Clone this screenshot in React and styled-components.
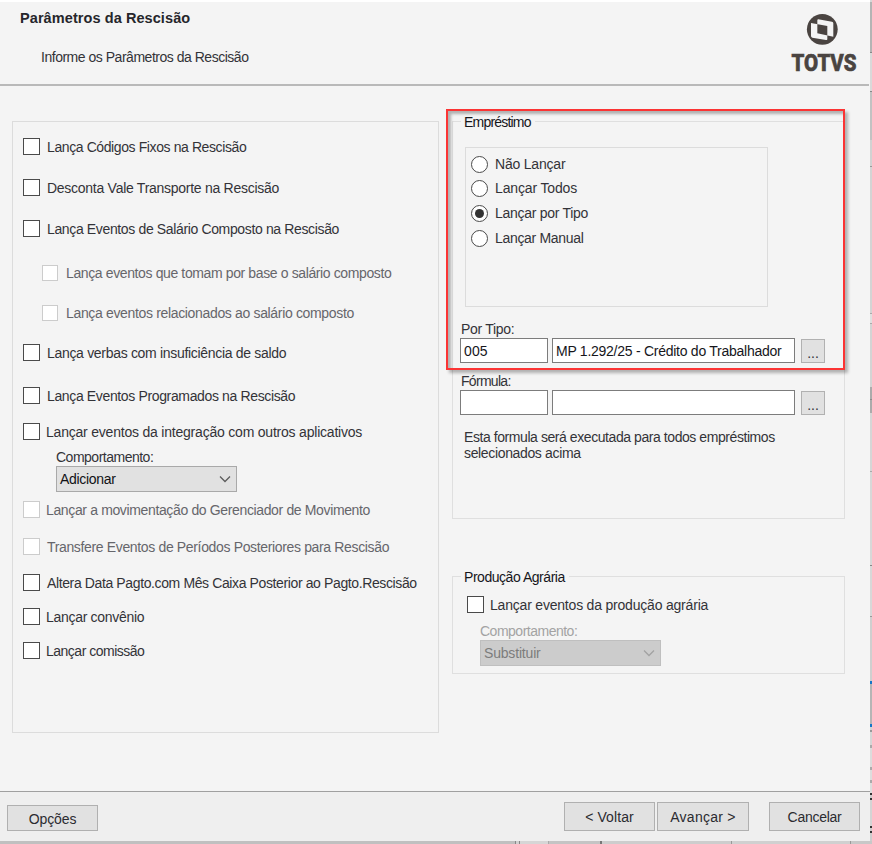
import React from "react";
import styled, { createGlobalStyle } from "styled-components";

const GlobalStyle = createGlobalStyle`
  *, *::before, *::after { box-sizing: border-box; }
  body {
    margin: 0;
    overflow: hidden;
    background: #c9c9c9;
    font-family: "Liberation Sans", Arial, sans-serif;
    font-size: 14px;
    color: #333338;
  }
`;

const Desktop = styled.div`
  display: grid;
  grid-template-columns: 870px 2px;
  grid-template-rows: 841px 3px;
  width: 872px;
  height: 844px;
`;

const Dialog = styled.main`
  display: flex;
  flex-direction: column;
  border-top: 2px solid #fff;
  background: #f4f4f4;
`;

const Header = styled.header`
  display: flex;
  justify-content: space-between;
  height: 84px;
  padding: 8px 7px 0 20px;
  border-bottom: 2px solid #b9b9b9;
  margin-right: 1px;
`;

const Headings = styled.div`
  display: flex;
  flex-direction: column;
  gap: 23px;
`;

const Title = styled.h1`
  margin: 0;
  font-size: 14.5px;
  line-height: 16px;
  letter-spacing: 0.08px;
  white-space: nowrap;
  color: #26262b;
`;

const Text = styled.span`
  font-size: 14px;
  line-height: 16px;
  white-space: nowrap;
  letter-spacing: ${(p) => p.$track || -0.3}px;
  color: ${(p) => p.$color || "inherit"};
`;

const Subtitle = styled(Text)`
  margin-left: 21px;
`;

const Brand = styled.svg`
  width: 72px;
  height: 68px;
  margin-top: 2px;
  overflow: visible;
`;

const Content = styled.div`
  display: flex;
  align-items: flex-start;
  gap: 13px;
  height: 705px;
  padding: 35px 0 0 12px;
`;

const OptionsPanel = styled.section`
  display: flex;
  flex-direction: column;
  align-items: flex-start;
  width: 427px;
  height: 612px;
  padding: 16px 0 0 10px;
  border: 1px solid #dcdcdc;
`;

const RightColumn = styled.div`
  position: relative;
  display: flex;
  flex-direction: column;
  gap: 57px;
  width: 393px;
`;

const GroupBox = styled.section`
  display: flex;
  flex-direction: column;
  align-items: flex-start;
  height: ${(p) => p.$height}px;
  border: 1px solid #dfdfdf;
`;

const Legend = styled(Text)`
  height: 16px;
  margin: -8px 0 0 8px;
  padding: 0 4px 0 3px;
  background: #f4f4f4;
  color: #16161b;
`;

const CheckRow = styled.label`
  display: flex;
  align-items: center;
  gap: ${(p) => p.$space || 7}px;
  height: 17px;
  margin: ${(p) => p.$top || 0}px 0 0 ${(p) => p.$indent || 0}px;
  color: ${(p) => (p.$disabled ? "#66666b" : "#333338")};

  ${Text} {
    padding-top: 1px;
  }
`;

const CheckBox = styled.span`
  flex: none;
  width: ${(p) => (p.$small ? 16 : 17)}px;
  height: ${(p) => (p.$small ? 16 : 17)}px;
  border: 1px solid ${(p) => (p.$disabled ? "#cccccc" : "#4a4a4a")};
  background: #fff;
`;

const FieldLabel = styled(Text)`
  height: 17px;
  margin: ${(p) => p.$top || 0}px 0 0 ${(p) => p.$indent || 0}px;
`;

const Select = styled.div`
  display: flex;
  align-items: center;
  justify-content: space-between;
  width: 181px;
  height: 26px;
  margin-left: ${(p) => p.$indent}px;
  padding: 0 4px 0 3px;
  border: 1px solid ${(p) => (p.$disabled ? "#bfbfbf" : "#a9a9a9")};
  background: ${(p) => (p.$disabled ? "#cccccc" : "#e1e1e1")};
  color: ${(p) => (p.$disabled ? "#7c7c7c" : "#111116")};
`;

const Chevron = styled.svg`
  width: 14px;
  height: 10px;
  fill: none;
  stroke: ${(p) => (p.$disabled ? "#a2a2a2" : "#5c5c5c")};
  stroke-width: 1.3;
`;

const RadioPanel = styled.div`
  display: flex;
  flex-direction: column;
  align-items: flex-start;
  gap: 8px;
  width: 303px;
  height: 160px;
  margin: 17px 0 0 12px;
  padding: 8px 0 0 5px;
  border: 1px solid #dcdcdc;
`;

const RadioRow = styled.label`
  display: flex;
  align-items: center;
  gap: 7px;
  height: 17px;
  margin-bottom: ${(p) => (p.$tight ? -1 : 0)}px;

  ${Text} {
    padding-bottom: 1px;
  }
`;

const Radio = styled.span`
  display: grid;
  place-items: center;
  width: 17px;
  height: 17px;
  border: 1px solid #4a4a4a;
  border-radius: 50%;
  background: #fff;

  &::after {
    content: "";
    width: 9px;
    height: 9px;
    border-radius: 50%;
    background: ${(p) => (p.$checked ? "#333" : "transparent")};
  }
`;

const LookupRow = styled.div`
  display: flex;
  align-items: flex-end;
  gap: 4px;
  margin: ${(p) => p.$top || 0}px 0 0 7px;
`;

const Input = styled.div`
  display: flex;
  align-items: center;
  width: ${(p) => p.$width}px;
  height: 25px;
  padding: 0 3px;
  border: 1px solid #7c7c7c;
  background: #fff;
  color: #16161b;
`;

const LookupButton = styled.button`
  width: 24px;
  height: 24px;
  margin-left: 2px;
  padding: 3px 0 0;
  border: 1px solid #b1b1b1;
  background: #e1e1e1;
  font: 14px/16px "Liberation Sans", Arial, sans-serif;
  color: #333338;
`;

const Note = styled.p`
  display: flex;
  flex-direction: column;
  margin: 14px 0 0 11px;
`;

/* Red callout drawn over the loan group */
const Highlight = styled.div`
  position: absolute;
  top: -12px;
  left: -6px;
  width: 399px;
  height: 261px;
  border: 2px solid #fb3434;
  box-shadow: 3px 3px 3px rgba(0, 0, 0, 0.28), inset 3px 3px 3px rgba(0, 0, 0, 0.28);
  pointer-events: none;
`;

const Footer = styled.footer`
  display: flex;
  align-items: flex-start;
  height: 50px;
  padding: 10px 10px 0 7px;
  border-top: 1px solid #a0a0a0;
  background: #efefef;
`;

const Button = styled.button`
  width: ${(p) => p.$width || 91}px;
  height: ${(p) => p.$height || 29}px;
  margin: ${(p) => p.$top || 0}px 0 0 ${(p) => p.$left || 0}px;
  padding: 1px 0 0;
  border: 1px solid #b0b0b0;
  background: #e1e1e1;
  color: #2b2b30;
`;

const Strip = styled.div`
  display: flex;
  flex-direction: ${(p) => (p.$vertical ? "column" : "row")};
  grid-column: ${(p) => (p.$vertical ? "auto" : "1 / -1")};
  overflow: hidden;
  background: #cdcdcd;
`;

const Segment = styled.span`
  flex: 0 0 ${(p) => p.$size}px;
  background: ${(p) => p.$color};
`;

const rightEdge = [
  [2, "#d8d8d8"], [50, "#b4b4b4"], [1, "#888"], [38, "#d9d9d9"], [1, "#888"],
  [48, "#c2c2c2"], [26, "#d2d2d2"], [1, "#999"], [146, "#d4d4d4"], [1, "#aaa"],
  [9, "#e0e0e0"], [1, "#aaa"], [63, "#d4d4d4"], [12, "#ababab"], [1, "#8c8c8c"],
  [13, "#ababab"], [58, "#d6d6d6"], [1, "#aaa"], [93, "#d8d8d8"], [1, "#888"],
  [50, "#d8d8d8"], [1, "#999"], [64, "#cfcfcf"], [3, "#1677c8"], [40, "#b5b5b5"],
  [3, "#1677c8"], [3, "#d3d3d3"], [2, "#999"], [13, "#d6d6d6"], [3, "#aaa"],
  [19, "#dcdcdc"], [3, "#aaa"], [10, "#ddd"], [3, "#aaa"], [10, "#ddd"],
  [2, "#333"], [3, "#ccc"], [2, "#333"], [26, "#d4d4d4"], [2, "#333"],
  [3, "#ccc"], [2, "#333"],
];

const bottomEdge = [
  [515, "#c0c0c0"], [1, "#888"], [3, "#d0d0d0"], [1, "#888"], [28, "#d6d6d6"],
  [1, "#aaa"], [51, "#c4c4c4"], [2, "#777"], [129, "#cdcdcd"], [1, "#999"],
  [118, "#d0d0d0"], [1, "#999"], [21, "#c8c8c8"],
];

const options = [
  { text: "Lança Códigos Fixos na Rescisão", track: -0.4 },
  { text: "Desconta Vale Transporte na Rescisão", top: 24, track: -0.27 },
  { text: "Lança Eventos de Salário Composto na Rescisão", top: 24, track: -0.36 },
  { text: "Lança eventos que tomam por base o salário composto", top: 27, track: -0.38, indent: 19, disabled: true, small: true },
  { text: "Lança eventos relacionados ao salário composto", top: 23, track: -0.34, indent: 19, disabled: true, small: true },
  { text: "Lança verbas com insuficiência de saldo", top: 23, track: -0.31 },
  { text: "Lança Eventos Programados na Rescisão", top: 26, track: -0.36 },
  { text: "Lançar eventos da integração com outros aplicativos", top: 19, track: -0.21, space: 6 },
];

const moreOptions = [
  { text: "Lançar a movimentação do Gerenciador de Movimento", top: 9, track: -0.36, space: 6, disabled: true },
  { text: "Transfere Eventos de Períodos Posteriores para Rescisão", top: 20, track: -0.35, disabled: true },
  { text: "Altera Data Pagto.com Mês Caixa Posterior ao Pagto.Rescisão", top: 19, track: -0.38 },
  { text: "Lançar convênio", top: 17, track: -0.3, space: 6 },
  { text: "Lançar comissão", top: 17, track: -0.5, space: 6 },
];

const loanModes = [
  { text: "Não Lançar", track: -0.2, tight: true },
  { text: "Lançar Todos", track: -0.15 },
  { text: "Lançar por Tipo", track: -0.28, checked: true },
  { text: "Lançar Manual", track: -0.32 },
];

function Option({ text, track, top, indent, space, disabled, small }) {
  return (
    <CheckRow $top={top} $indent={indent} $space={small ? 8 : space} $disabled={disabled}>
      <CheckBox $disabled={disabled} $small={small} />
      <Text $track={track}>{text}</Text>
    </CheckRow>
  );
}

function Combo({ children, indent, track, disabled }) {
  return (
    <Select $indent={indent} $disabled={disabled}>
      <Text $track={track}>{children}</Text>
      <Chevron viewBox="0 0 14 10" $disabled={disabled}>
        <path d="M2 2.5 7 7.5 12 2.5" />
      </Chevron>
    </Select>
  );
}

function Logo() {
  return (
    <Brand viewBox="0 0 72 68" fill="#4a4441" role="img" aria-label="TOTVS">
      <circle cx="32.3" cy="17.3" r="15.4" />
      <g transform="translate(17 2) scale(.333)">
        <path
          fill="#f4f4f4"
          fillRule="evenodd"
          d="M34 16 75 23Q79 24 79 28V68L31 58V19Q31 16 34 16ZM12 27 61 36V76Q61 79 57 78L16 71Q12 70 12 66Z"
        />
      </g>
      <text x="1.5" y="59" textLength="65" lengthAdjust="spacingAndGlyphs" fontFamily="Roboto, sans-serif" fontWeight="800" fontSize="23.5" stroke="#4a4441" strokeWidth="0.7">
        TOTVS
      </text>
    </Brand>
  );
}

export default function App() {
  return (
    <>
      <GlobalStyle />
      <Desktop>
        <Dialog>
          <Header>
            <Headings>
              <Title>Parâmetros da Rescisão</Title>
              <Subtitle $track={-0.48}>Informe os Parâmetros da Rescisão</Subtitle>
            </Headings>
            <Logo />
          </Header>

          <Content>
            <OptionsPanel>
              {options.map((o) => <Option key={o.text} {...o} />)}
              <FieldLabel $top={9} $indent={33} $track={-0.5}>Comportamento:</FieldLabel>
              <Combo indent={33} track={-0.3}>Adicionar</Combo>
              {moreOptions.map((o) => <Option key={o.text} {...o} />)}
            </OptionsPanel>

            <RightColumn>
              <GroupBox $height={398}>
                <Legend $track={-0.8}>Empréstimo</Legend>
                <RadioPanel>
                  {loanModes.map((m) => (
                    <RadioRow key={m.text} $tight={m.tight}>
                      <Radio $checked={m.checked} />
                      <Text $track={m.track}>{m.text}</Text>
                    </RadioRow>
                  ))}
                </RadioPanel>
                <FieldLabel $top={14} $indent={8} $track={-0.3}>Por Tipo:</FieldLabel>
                <LookupRow>
                  <Input $width={88}><Text $track={0.1}>005</Text></Input>
                  <Input $width={243}><Text $track={-0.26}>MP 1.292/25 - Crédito do Trabalhador</Text></Input>
                  <LookupButton>...</LookupButton>
                </LookupRow>
                <FieldLabel $top={10} $indent={8} $track={-0.7}>Fórmula:</FieldLabel>
                <LookupRow>
                  <Input $width={88} />
                  <Input $width={243} />
                  <LookupButton>...</LookupButton>
                </LookupRow>
                <Note>
                  <Text $track={-0.43}>Esta formula será executada para todos empréstimos</Text>
                  <Text $track={-0.35}>selecionados acima</Text>
                </Note>
              </GroupBox>

              <GroupBox $height={98}>
                <Legend $track={-0.46}>Produção Agrária</Legend>
                <Option text="Lançar eventos da produção agrária" track={-0.2} top={11} indent={14} space={6} />
                <FieldLabel $top={10} $indent={27} $track={-0.5} $color="#a3a3a3">Comportamento:</FieldLabel>
                <Combo indent={27} track={-0.18} disabled>Substituir</Combo>
              </GroupBox>
              <Highlight />
            </RightColumn>
          </Content>

          <Footer>
            <Button $height={26} $top={3}><Text $track={-0.1}>Opções</Text></Button>
            <Button $left={466}><Text $track={0.1}>&lt; Voltar</Text></Button>
            <Button $left={2} $width={92}><Text $track={0.25}>Avançar &gt;</Text></Button>
            <Button $left={20}><Text $track={-0.28}>Cancelar</Text></Button>
          </Footer>
        </Dialog>

        <Strip $vertical>
          {rightEdge.map(([size, color], i) => <Segment key={i} $size={size} $color={color} />)}
        </Strip>
        <Strip>
          {bottomEdge.map(([size, color], i) => <Segment key={i} $size={size} $color={color} />)}
        </Strip>
      </Desktop>
    </>
  );
}
